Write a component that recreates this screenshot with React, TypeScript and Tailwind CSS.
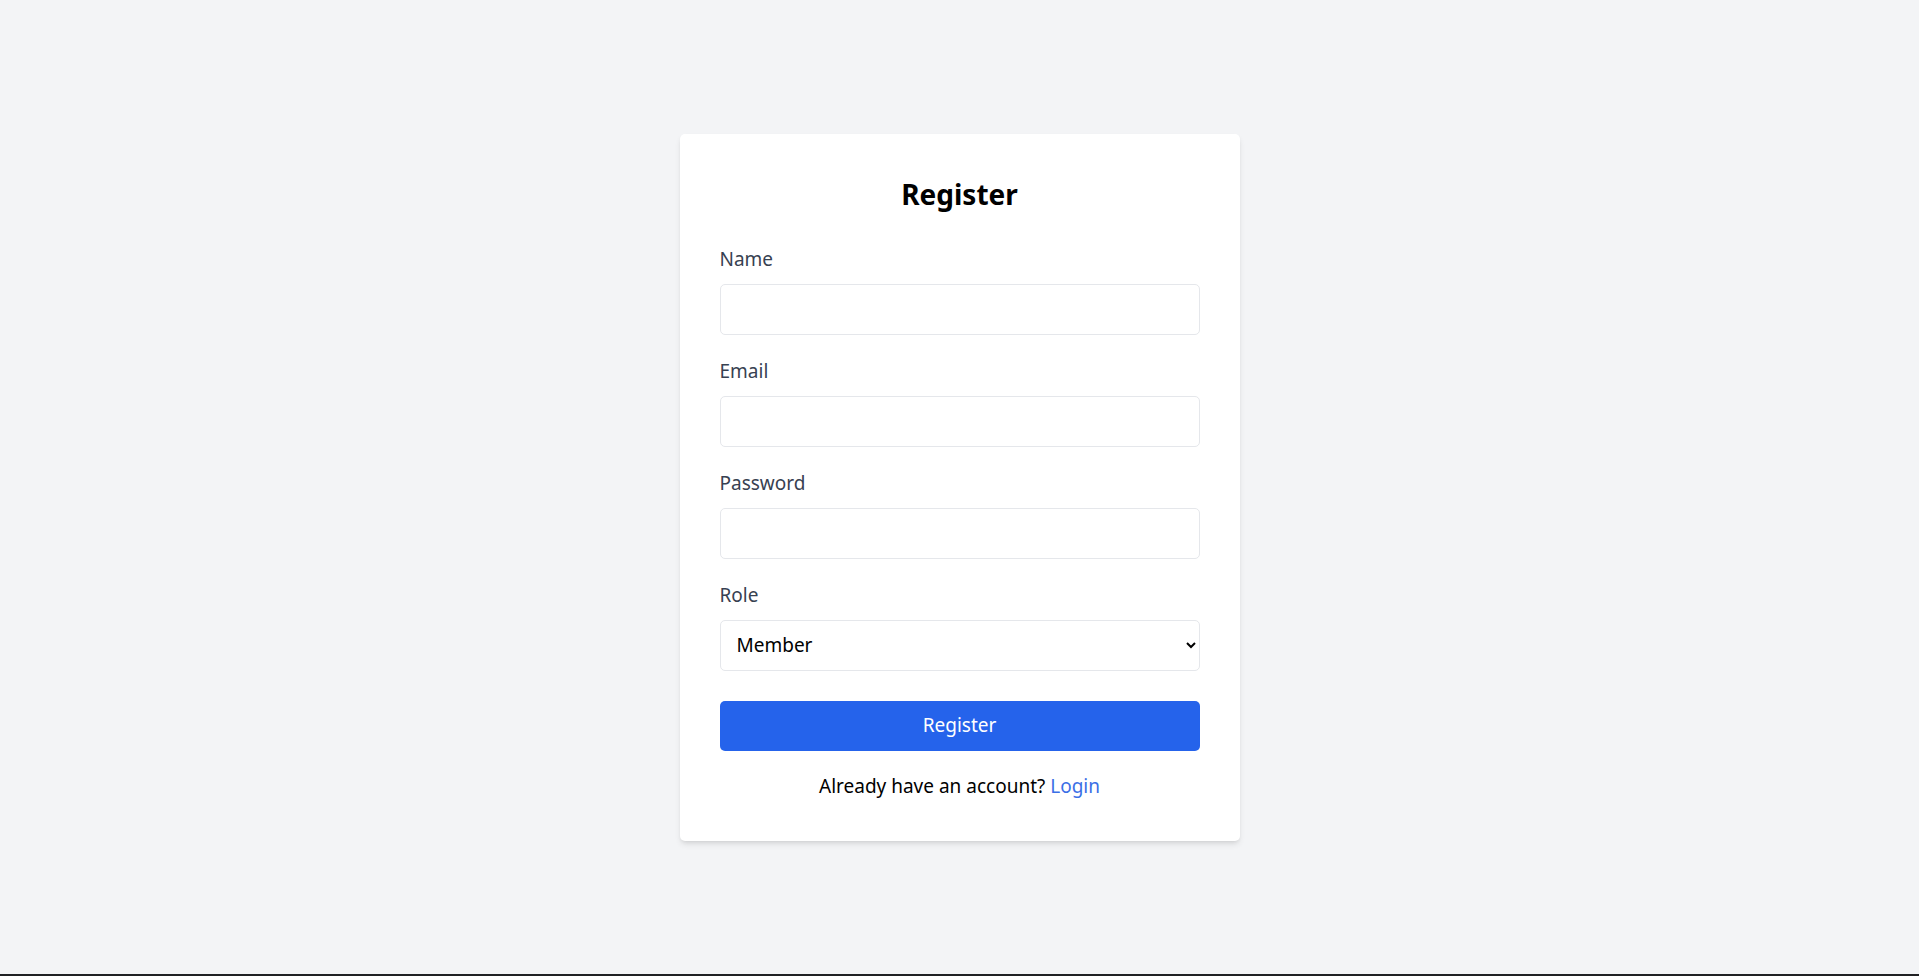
import React, { useState } from 'react';

const fields = [
  { key: 'name', label: 'Name', type: 'text' },
  { key: 'email', label: 'Email', type: 'email' },
  { key: 'password', label: 'Password', type: 'password' },
];

const App: React.FC = () => {
  const [form, setForm] = useState({ name: '', email: '', password: '', role: 'member' });

  const handleSubmit = (e: React.FormEvent) => {
    e.preventDefault();
  };

  return (
    <div className="flex flex-col h-screen bg-[#f3f4f6] font-['Noto_Sans',sans-serif]">
      <div className="flex-1 flex items-center justify-center">
        <form onSubmit={handleSubmit} className="w-140 bg-white rounded-[5px] shadow-md p-10">
          <h2 className="text-[28px] leading-[40px] font-bold text-black text-center mb-[30px]">Register</h2>

          {fields.map(f => (
            <div key={f.key} className="mb-[21px]">
              <label className="block text-[19px] leading-[30px] text-[#374151] mb-[10px]">{f.label}</label>
              <input
                type={f.type}
                value={form[f.key as keyof typeof form]}
                onChange={e => setForm({ ...form, [f.key]: e.target.value })}
                className="block w-full h-[51px] px-4 text-[19px] border border-[#e5e7eb] rounded-[5px] outline-none"
              />
            </div>
          ))}

          <div className="mb-[30px]">
            <label className="block text-[19px] leading-[30px] text-[#374151] mb-[10px]">Role</label>
            <select
              value={form.role}
              onChange={e => setForm({ ...form, role: e.target.value })}
              className="block w-full h-[51px] pl-3 pr-1 text-[19px] text-black bg-white border border-[#e5e7eb] rounded-[5px] outline-none"
            >
              <option value="member">Member</option>
              <option value="admin">Admin</option>
            </select>
          </div>

          <button type="submit" className="block w-full h-[50px] bg-[#2563eb] text-white text-[19px] rounded-[5px]">
            Register
          </button>

          <p className="mt-5 text-center text-[19px] leading-[30px] text-black">
            Already have an account? <a href="#" className="text-[#3b6fe6]">Login</a>
          </p>
        </form>
      </div>
      <div className="h-[2px] bg-[#202124]" />
    </div>
  );
};

export default App;
